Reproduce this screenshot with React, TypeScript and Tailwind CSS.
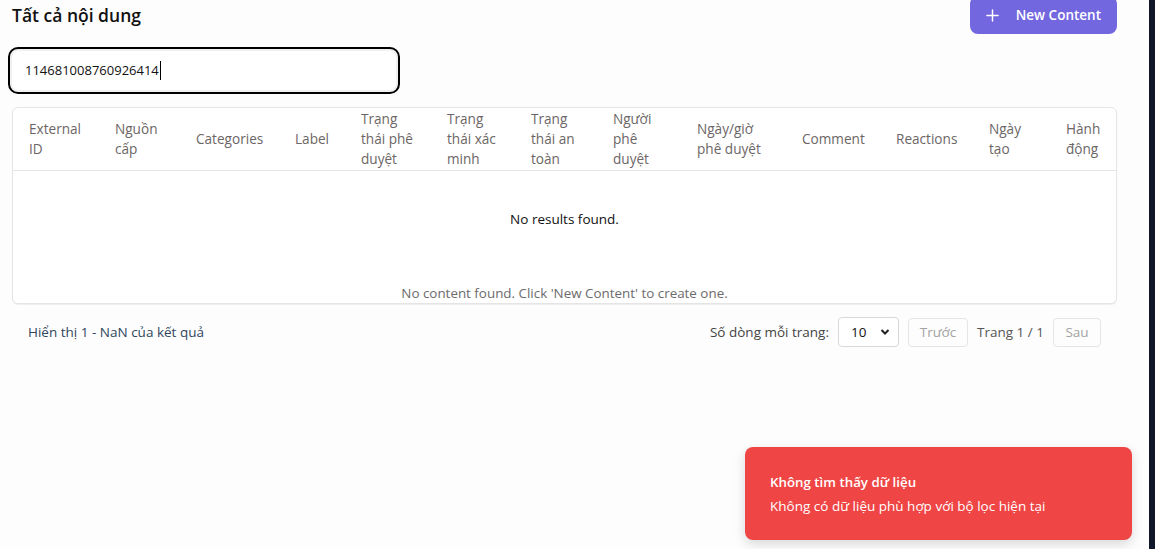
import React from 'react';

const font = { fontFamily: '"Open Sans", "Noto Sans", sans-serif' };

const columns: { lines: string[]; width: number }[] = [
  { lines: ['External', 'ID'], width: 86 },
  { lines: ['Nguồn', 'cấp'], width: 81 },
  { lines: ['Categories'], width: 99 },
  { lines: ['Label'], width: 66 },
  { lines: ['Trạng', 'thái phê', 'duyệt'], width: 86 },
  { lines: ['Trạng', 'thái xác', 'minh'], width: 84 },
  { lines: ['Trạng', 'thái an', 'toàn'], width: 82 },
  { lines: ['Người', 'phê', 'duyệt'], width: 84 },
  { lines: ['Ngày/giờ', 'phê duyệt'], width: 105 },
  { lines: ['Comment'], width: 94 },
  { lines: ['Reactions'], width: 93 },
  { lines: ['Ngày', 'tạo'], width: 77 },
  { lines: ['Hành', 'động'], width: 66 },
];

const App: React.FC = () => {
  return (
    <div className="flex h-[549px] w-full overflow-hidden bg-[#fdfdfd] text-[14px]" style={font}>
      <div className="relative flex-1 px-3">
        <div className="-mt-1 flex h-[38px] items-center justify-between">
          <h1 className="text-[17.5px] font-semibold text-[#111]">Tất cả nội dung</h1>
          <button className="mr-[20px] flex h-[38px] items-center gap-[17px] rounded-lg bg-[#7367e0] pl-[16px] pr-[16px] text-[13.5px] font-semibold text-white">
            <svg width="13" height="13" viewBox="0 0 14 14" fill="none" stroke="currentColor" strokeWidth="1.6" strokeLinecap="round">
              <path d="M7 1v12M1 7h12" />
            </svg>
            New Content
          </button>
        </div>

        <div className="-ml-1 mt-[13px] flex h-[47px] w-[392px] items-center rounded-[10px] border-2 border-black bg-white pl-[15px] shadow-[inset_0_0_0_2px_#f1f1f1]">
          <span className="text-[13px] text-[#111]">114681008760926414</span>
          <span className="ml-px inline-block h-[19px] w-px bg-black" />
        </div>

        <div className="mt-[13px] w-[1105px] overflow-hidden rounded-md border border-[#e5e5e5] bg-white shadow-[0_1px_1px_rgba(0,0,0,0.06)]">
          <table className="w-full table-fixed border-collapse">
            <colgroup>
              {columns.map((c, i) => (
                <col key={i} style={{ width: c.width }} />
              ))}
            </colgroup>
            <thead>
              <tr className="h-[62px] border-b border-[#e5e5e5]">
                {columns.map((c, i) => (
                  <th key={i} className="px-4 text-left align-middle text-[13.6px] font-normal leading-[20px] text-[#6b6665]">
                    {c.lines.map((l, j) => (
                      <div key={j} className="whitespace-nowrap">{l}</div>
                    ))}
                  </th>
                ))}
              </tr>
            </thead>
            <tbody>
              <tr>
                <td colSpan={13} className="h-[97px] text-center text-[13.5px] text-[#111]">
                  No results found.
                </td>
              </tr>
              <tr>
                <td colSpan={13} className="pt-[16px] text-center text-[13.4px] leading-[20px] text-[#6b6b6b]">
                  No content found. Click 'New Content' to create one.
                </td>
              </tr>
            </tbody>
          </table>
        </div>

        <div className="mt-[13px] flex w-[1105px] items-center justify-between pl-[16px] pr-[16px]">
          <span className="text-[13.5px] text-[#31475c]">Hiển thị 1 - NaN của kết quả</span>
          <div className="flex items-center">
            <span className="mr-[9px] text-[13.5px] text-[#444]">Số dòng mỗi trang:</span>
            <div className="flex h-[30px] w-[61px] items-center justify-between rounded border border-[#d8d8d8] bg-white pl-[12px] pr-[8px]">
              <span className="text-[13.5px] text-[#111]">10</span>
              <svg width="10" height="8" viewBox="0 0 10 8" fill="none" stroke="#222" strokeWidth="2">
                <path d="M1.5 2l3.5 3.5L8.5 2" />
              </svg>
            </div>
            <button className="ml-[9px] h-[29px] w-[60px] rounded border border-[#e5e5e5] text-[13.5px] text-[#a3a3a3]">Trước</button>
            <span className="ml-[9px] text-[13.5px] text-[#555]">Trang 1 / 1</span>
            <button className="ml-[9px] h-[29px] w-[48px] rounded border border-[#e5e5e5] text-[13.5px] text-[#a3a3a3]">Sau</button>
          </div>
        </div>

        <div className="absolute left-[745px] top-[447px] flex h-[93px] w-[387px] flex-col justify-center rounded-lg bg-[#ef4545] pl-[25px] shadow-[0_4px_12px_rgba(0,0,0,0.15)]">
          <div className="text-[13.3px] font-semibold leading-[20px] text-white">Không tìm thấy dữ liệu</div>
          <div className="mt-[4px] text-[13.5px] leading-[20px] text-white">Không có dữ liệu phù hợp với bộ lọc hiện tại</div>
        </div>
      </div>
      <div className="h-full w-[6px] bg-[#0f1729]" />
    </div>
  );
};

export default App;
